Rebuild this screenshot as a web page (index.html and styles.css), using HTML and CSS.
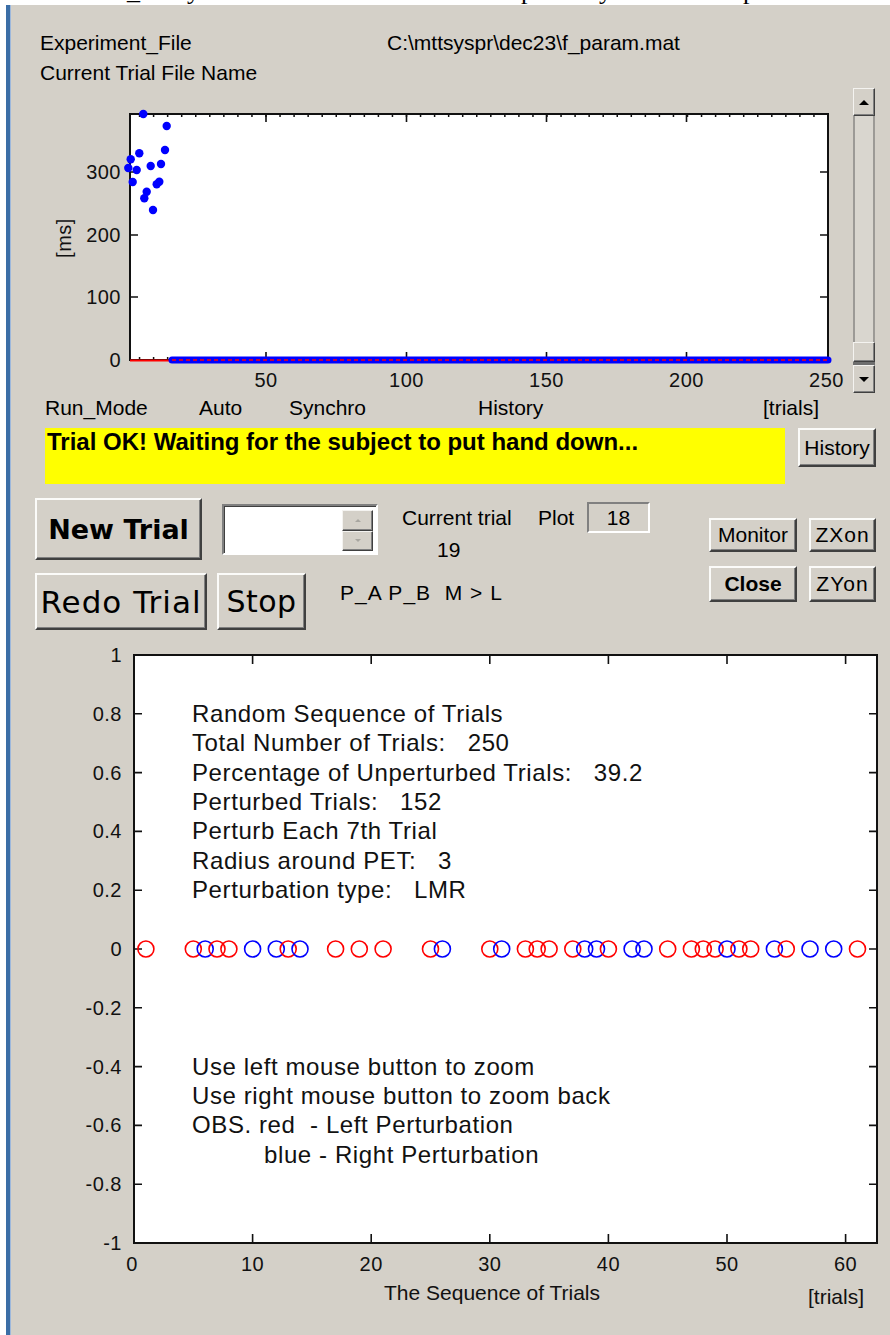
FILE: index.html
```html
<!DOCTYPE html>
<html lang="en">
<head>
<meta charset="utf-8">
<title>Trial Sequence Monitor</title>
<link rel="stylesheet" href="styles.css">
</head>
<body>
<div class="doc-strip"><div class="doc-line"><span class="g1">_</span><span class="g2">y</span><span class="g3">p</span><span class="g4">y</span><span class="g5">p</span></div></div>

<div class="window">
  <div class="file-info">
    <div class="info-row"><span class="info-label">Experiment_File</span><span class="info-value">C:\mttsyspr\dec23\f_param.mat</span></div>
    <div class="info-row"><span class="info-label">Current Trial File Name</span></div>
  </div>

  <div class="history-plot">
    <svg class="rt-chart" viewBox="10 88 838 307" width="838" height="307" xmlns="http://www.w3.org/2000/svg">
      <rect x="130" y="114" width="698" height="246" fill="#fff"/>
      <!-- minor ticks every 5 trials -->
      <line x1="138.8" y1="115.5" x2="828" y2="115.5" class="ax" stroke-width="3" stroke-dasharray="1.5 12.55"/>
      <line x1="138.8" y1="358.5" x2="828" y2="358.5" class="ax" stroke-width="3" stroke-dasharray="1.5 12.55"/>
      <path class="ax" stroke-width="1.6" d="M266 114v8M406.5 114v8M546.5 114v8M686.5 114v8M266 360v-8M406.5 360v-8M546.5 360v-8M686.5 360v-8M130 172h8M130 235h8M130 297h8M828 172h-8M828 235h-8M828 297h-8"/>
      <path class="ax" stroke-width="2" fill="none" d="M130 114V360H828V114Z"/>
      <!-- remaining trials at zero -->
      <line x1="130" y1="360.5" x2="169" y2="360.5" stroke="#ff0000" stroke-width="2"/>
      <line x1="172" y1="360" x2="828" y2="360" stroke="#0000ff" stroke-width="7" stroke-linecap="round"/>
      <line x1="172" y1="360" x2="828" y2="360" stroke="#ff0000" stroke-width="1.6" stroke-dasharray="4 3"/>
      <!-- reaction times -->
      <g fill="#0000ff">
        <circle cx="143.3" cy="114" r="4.2"/>
        <circle cx="166.7" cy="126" r="4.2"/>
        <circle cx="130.7" cy="159.3" r="4.2"/>
        <circle cx="139.3" cy="153.3" r="4.2"/>
        <circle cx="128.3" cy="168" r="4.2"/>
        <circle cx="136.7" cy="170" r="4.2"/>
        <circle cx="150.7" cy="166" r="4.2"/>
        <circle cx="161" cy="164" r="4.2"/>
        <circle cx="165" cy="150" r="4.2"/>
        <circle cx="132.7" cy="182" r="4.2"/>
        <circle cx="159.3" cy="181.7" r="4.2"/>
        <circle cx="156.7" cy="184.3" r="4.2"/>
        <circle cx="146.7" cy="191.7" r="4.2"/>
        <circle cx="144.3" cy="198.3" r="4.2"/>
        <circle cx="153" cy="210" r="4.2"/>
      </g>
      <g class="tick-label" text-anchor="end">
        <text x="121" y="367">0</text>
        <text x="121" y="304">100</text>
        <text x="121" y="242">200</text>
        <text x="121" y="179">300</text>
      </g>
      <g class="tick-label" text-anchor="middle">
        <text x="266" y="387">50</text>
        <text x="406.5" y="387">100</text>
        <text x="546.5" y="387">150</text>
        <text x="686.5" y="387">200</text>
        <text x="826.5" y="387">250</text>
      </g>
      <text class="tick-label" text-anchor="middle" transform="translate(71 238) rotate(-90)">[ms]</text>
    </svg>
    <div class="vscroll">
      <div class="sb-btn"><span class="arrow-up"></span></div>
      <div class="sb-track"></div>
      <div class="sb-thumb"></div>
      <div class="sb-gap"></div>
      <div class="sb-btn"><span class="arrow-down"></span></div>
    </div>
  </div>

  <div class="mode-row">
    <span>Run_Mode</span>
    <span>Auto</span>
    <span>Synchro</span>
    <span>History</span>
    <span>[trials]</span>
  </div>

  <div class="status-row">
    <div class="status-msg">Trial OK! Waiting for the subject to put hand down...</div>
    <button class="btn btn-history">History</button>
  </div>

  <div class="controls">
    <div class="ctl-main">
      <div class="ctl-row">
        <button class="btn btn-new">New Trial</button>
        <div class="spin">
          <div class="spin-field"></div>
          <div class="spin-btns">
            <div class="spin-btn"><span class="mini-up"></span></div>
            <div class="spin-btn"><span class="mini-down"></span></div>
          </div>
        </div>
        <div class="trial-info">
          <div class="trial-info-top">
            <span class="ti-label">Current trial</span>
            <span class="plot-label">Plot</span>
            <span class="plot-box">18</span>
          </div>
          <div class="trial-num">19</div>
        </div>
      </div>
      <div class="ctl-row">
        <button class="btn btn-redo">Redo Trial</button>
        <button class="btn btn-stop">Stop</button>
        <span class="pab">P_A P_B&nbsp; M &gt; L</span>
      </div>
    </div>
    <div class="ctl-side">
      <button class="btn btn-small">Monitor</button>
      <button class="btn btn-small btn-zoom">ZXon</button>
      <button class="btn btn-small btn-bold">Close</button>
      <button class="btn btn-small btn-zoom">ZYon</button>
    </div>
  </div>

  <svg class="seq-chart" viewBox="10 640 880 695" width="880" height="695" xmlns="http://www.w3.org/2000/svg">
    <rect x="134" y="655" width="743" height="588" fill="#fff"/>
    <path class="ax" stroke-width="1.6" d="M134 713.8h8M134 772.6h8M134 831.4h8M134 890.2h8M134 949h8M134 1007.8h8M134 1066.6h8M134 1125.4h8M134 1184.2h8M877 713.8h-8M877 772.6h-8M877 831.4h-8M877 890.2h-8M877 949h-8M877 1007.8h-8M877 1066.6h-8M877 1125.4h-8M877 1184.2h-8M252.6 655v9M371.2 655v9M489.8 655v9M608.4 655v9M727 655v9M845.6 655v9M252.6 1243v-9M371.2 1243v-9M489.8 1243v-9M608.4 1243v-9M727 1243v-9M845.6 1243v-9"/>
    <path class="ax" stroke-width="2" fill="none" d="M134 655V1243H877V655Z"/>

    <text class="note" x="192" y="721.7">Random Sequence of Trials<tspan x="192" dy="29.4">Total Number of Trials:   250</tspan><tspan x="192" dy="29.4">Percentage of Unperturbed Trials:   39.2</tspan><tspan x="192" dy="29.4">Perturbed Trials:   152</tspan><tspan x="192" dy="29.4">Perturb Each 7th Trial</tspan><tspan x="192" dy="29.4">Radius around PET:   3</tspan><tspan x="192" dy="29.4">Perturbation type:   LMR</tspan></text>

    <g fill="none" stroke-width="1.6">
      <circle cx="145.9" cy="949" r="8" class="left"/>
      <circle cx="193.3" cy="949" r="8" class="left"/>
      <circle cx="205.2" cy="949" r="8" class="right"/>
      <circle cx="217" cy="949" r="8" class="left"/>
      <circle cx="228.9" cy="949" r="8" class="left"/>
      <circle cx="252.6" cy="949" r="8" class="right"/>
      <circle cx="276.3" cy="949" r="8" class="right"/>
      <circle cx="288.2" cy="949" r="8" class="left"/>
      <circle cx="300" cy="949" r="8" class="right"/>
      <circle cx="335.6" cy="949" r="8" class="left"/>
      <circle cx="359.3" cy="949" r="8" class="left"/>
      <circle cx="383.1" cy="949" r="8" class="left"/>
      <circle cx="430.5" cy="949" r="8" class="left"/>
      <circle cx="442.4" cy="949" r="8" class="right"/>
      <circle cx="489.8" cy="949" r="8" class="left"/>
      <circle cx="501.7" cy="949" r="8" class="right"/>
      <circle cx="525.4" cy="949" r="8" class="left"/>
      <circle cx="537.2" cy="949" r="8" class="left"/>
      <circle cx="549.1" cy="949" r="8" class="left"/>
      <circle cx="572.8" cy="949" r="8" class="left"/>
      <circle cx="584.7" cy="949" r="8" class="right"/>
      <circle cx="596.5" cy="949" r="8" class="right"/>
      <circle cx="608.4" cy="949" r="8" class="left"/>
      <circle cx="632.1" cy="949" r="8" class="right"/>
      <circle cx="644" cy="949" r="8" class="right"/>
      <circle cx="667.7" cy="949" r="8" class="left"/>
      <circle cx="691.4" cy="949" r="8" class="left"/>
      <circle cx="703.3" cy="949" r="8" class="left"/>
      <circle cx="715.1" cy="949" r="8" class="left"/>
      <circle cx="727" cy="949" r="8" class="right"/>
      <circle cx="738.9" cy="949" r="8" class="left"/>
      <circle cx="750.7" cy="949" r="8" class="left"/>
      <circle cx="774.4" cy="949" r="8" class="right"/>
      <circle cx="786.3" cy="949" r="8" class="left"/>
      <circle cx="810" cy="949" r="8" class="right"/>
      <circle cx="833.7" cy="949" r="8" class="right"/>
      <circle cx="857.5" cy="949" r="8" class="left"/>
    </g>

    <text class="note" x="192" y="1074.5">Use left mouse button to zoom<tspan x="192" dy="29.4">Use right mouse button to zoom back</tspan><tspan x="192" dy="29.4">OBS. red  - Left Perturbation</tspan><tspan x="264" dy="29.4">blue - Right Perturbation</tspan></text>

    <g class="tick-label" text-anchor="end">
      <text x="122" y="662">1</text>
      <text x="122" y="720.8">0.8</text>
      <text x="122" y="779.6">0.6</text>
      <text x="122" y="838.4">0.4</text>
      <text x="122" y="897.2">0.2</text>
      <text x="122" y="956">0</text>
      <text x="122" y="1014.8">-0.2</text>
      <text x="122" y="1073.6">-0.4</text>
      <text x="122" y="1132.4">-0.6</text>
      <text x="122" y="1191.2">-0.8</text>
      <text x="122" y="1250">-1</text>
    </g>
    <g class="tick-label" text-anchor="middle">
      <text x="132" y="1271">0</text>
      <text x="252.6" y="1271">10</text>
      <text x="371.2" y="1271">20</text>
      <text x="489.8" y="1271">30</text>
      <text x="608.4" y="1271">40</text>
      <text x="727" y="1271">50</text>
      <text x="845.6" y="1271">60</text>
    </g>
    <text class="axis-title" x="492" y="1300" text-anchor="middle">The Sequence of Trials</text>
    <text class="axis-title" x="836" y="1304" text-anchor="middle">[trials]</text>
  </svg>
</div>
</body>
</html>
```

FILE: styles.css
```css
html, body {
  margin: 0;
  padding: 0;
}

body {
  width: 890px;
  height: 1335px;
  overflow: hidden;
  background: #fff;
  font-family: "Liberation Sans", Arial, sans-serif;
  color: #000;
}

/* strip of the surrounding document above the window */
.doc-strip {
  height: 5px;
  overflow: hidden;
}

.doc-line {
  display: flex;
  margin-top: -22px;
  font: 26px/26px "Liberation Serif", "Times New Roman", serif;
}

.doc-line .g1 { margin-left: 127px; }
.doc-line .g2 { margin-left: 47px; }
.doc-line .g3 { margin-left: 321px; }
.doc-line .g4 { margin-left: 65px; }
.doc-line .g5 { margin-left: 131px; }

/* figure window */
.window {
  height: 1330px;
  margin-left: 6px;
  border-left: 4px solid #3b6ea6;
  background: #d4d0c8;
  box-shadow: inset 1px 0 0 #9db8dc;
  font-size: 21px;
}

.file-info {
  padding: 23px 0 0 30px;
}

.info-row {
  display: flex;
  height: 30px;
  line-height: 30px;
  white-space: nowrap;
}

.info-label {
  width: 347px;
}

/* reaction time history */
.history-plot {
  display: flex;
  align-items: flex-start;
  height: 307px;
}

.rt-chart {
  display: block;
  flex: none;
}

.ax {
  stroke: #111;
}

.tick-label {
  font-family: "Liberation Sans", Arial, sans-serif;
  font-size: 20px;
  letter-spacing: 0.5px;
  fill: #111;
}

.vscroll {
  margin-left: 5px;
  width: 22px;
  height: 305px;
  display: flex;
  flex-direction: column;
}

.sb-btn,
.sb-thumb,
.spin-btn {
  box-sizing: border-box;
  background: #d4d0c8;
  border: 1px solid;
  border-color: #f4f3f0 #404040 #404040 #f4f3f0;
  box-shadow: inset -1px -1px 0 #808080;
  display: flex;
  align-items: center;
  justify-content: center;
}

.sb-btn {
  height: 28px;
}

.sb-track {
  height: 226px;
  box-sizing: border-box;
  background: #d9d6cf;
  border-left: 2px solid #9c9a96;
  border-right: 2px solid #9c9a96;
}

.sb-thumb {
  height: 20px;
}

.sb-gap {
  height: 3px;
  background: #6e6e6e;
}

.arrow-up,
.arrow-down {
  width: 0;
  height: 0;
  border-left: 5px solid transparent;
  border-right: 5px solid transparent;
}

.arrow-up { border-bottom: 5px solid #000; }
.arrow-down { border-top: 5px solid #000; }

/* run mode labels */
.mode-row {
  display: grid;
  grid-template-columns: 154px 90px 189px 285px auto;
  height: 26px;
  line-height: 26px;
  padding-left: 35px;
  white-space: nowrap;
}

/* status line */
.status-row {
  display: flex;
  align-items: flex-start;
  height: 56px;
  margin-top: 7px;
  padding-left: 35px;
}

.status-msg {
  width: 740px;
  height: 56px;
  box-sizing: border-box;
  padding-left: 2px;
  background: #ffff00;
  font-weight: bold;
  font-size: 24px;
  line-height: 28px;
  white-space: nowrap;
}

/* push buttons */
.btn {
  box-sizing: border-box;
  padding: 0;
  margin: 0;
  background: #d4d0c8;
  border: 2px solid;
  border-color: #fbfbf9 #404040 #404040 #fbfbf9;
  box-shadow: inset -1px -1px 0 #808080;
  color: #000;
  font-family: "Liberation Sans", Arial, sans-serif;
  font-size: 21px;
  white-space: nowrap;
}

.btn-history {
  margin-left: 13px;
  width: 78px;
  height: 39px;
}

/* control panel */
.controls {
  display: flex;
  height: 156px;
  box-sizing: border-box;
  padding: 14px 14px 0 25px;
}

.ctl-main {
  display: flex;
  flex-direction: column;
  gap: 10px;
}

.ctl-row {
  display: flex;
  align-items: flex-start;
}

.btn-new {
  width: 167px;
  height: 62px;
  font-family: "DejaVu Sans", Verdana, sans-serif;
  font-weight: bold;
  font-size: 27px;
}

.btn-redo {
  width: 172px;
  height: 57px;
  font-family: "DejaVu Sans", Verdana, sans-serif;
  font-size: 31px;
  letter-spacing: 1px;
}

.btn-stop {
  width: 89px;
  height: 57px;
  margin-left: 10px;
  font-family: "DejaVu Sans", Verdana, sans-serif;
  font-size: 30px;
  letter-spacing: 0.5px;
}

.spin {
  display: flex;
  width: 156px;
  height: 51px;
  margin: 6px 0 0 20px;
  box-sizing: border-box;
  background: #fff;
  border: 2px solid;
  border-color: #808080 #fff #fff #808080;
  box-shadow: inset 1px 1px 0 #404040;
  padding: 4px 3px 2px 2px;
}

.spin-field {
  flex: 1;
}

.spin-btns {
  width: 31px;
  display: flex;
  flex-direction: column;
}

.spin-btn {
  flex: 1;
}

.mini-up,
.mini-down {
  width: 0;
  height: 0;
  border-left: 3px solid transparent;
  border-right: 3px solid transparent;
}

.mini-up { border-bottom: 3px solid #a8a6a0; }
.mini-down { border-top: 3px solid #a8a6a0; }

.trial-info {
  margin-left: 24px;
}

.trial-info-top {
  display: flex;
  align-items: center;
  height: 31px;
  margin-top: 4px;
  white-space: nowrap;
}

.ti-label {
  width: 136px;
}

.plot-label {
  width: 49px;
}

.plot-box {
  width: 63px;
  height: 31px;
  box-sizing: border-box;
  border: 2px solid;
  border-color: #808080 #fff #fff #808080;
  text-align: center;
  line-height: 27px;
}

.trial-num {
  margin-top: 4px;
  padding-left: 35px;
  line-height: 26px;
}

.pab {
  margin: 7px 0 0 34px;
  line-height: 26px;
  letter-spacing: 1px;
  white-space: nowrap;
}

.ctl-side {
  margin-left: auto;
  margin-top: 20px;
  display: grid;
  grid-template-columns: 88px 67px;
  grid-template-rows: 34px 36px;
  column-gap: 12px;
  row-gap: 14px;
  align-self: flex-start;
}

.btn-small {
  width: 100%;
  height: 100%;
}

.btn-zoom {
  letter-spacing: 1px;
}

.btn-bold {
  font-weight: bold;
}

/* trial sequence plot */
.seq-chart {
  display: block;
}

.note {
  font-family: "Liberation Sans", Arial, sans-serif;
  font-size: 24px;
  letter-spacing: 0.6px;
  white-space: pre;
  fill: #111;
}

.axis-title {
  font-family: "Liberation Sans", Arial, sans-serif;
  font-size: 21px;
  fill: #111;
}

.left { stroke: #ff0000; }
.right { stroke: #0000ff; }
```
